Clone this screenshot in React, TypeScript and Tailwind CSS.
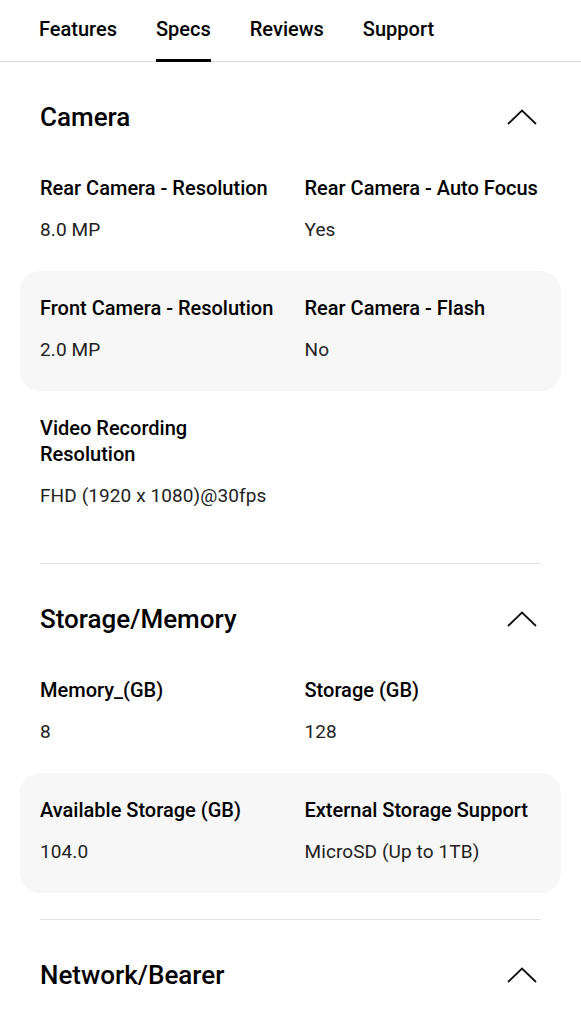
import React from "react";

type Spec = { label: string; value: string; wrap?: boolean };

const sections: { title: string; rows: Spec[][] }[] = [
  {
    title: "Camera",
    rows: [
      [
        { label: "Rear Camera - Resolution", value: "8.0 MP" },
        { label: "Rear Camera - Auto Focus", value: "Yes" },
      ],
      [
        { label: "Front Camera - Resolution", value: "2.0 MP" },
        { label: "Rear Camera - Flash", value: "No" },
      ],
      [{ label: "Video Recording Resolution", value: "FHD (1920 x 1080)@30fps", wrap: true }],
    ],
  },
  {
    title: "Storage/Memory",
    rows: [
      [
        { label: "Memory_(GB)", value: "8" },
        { label: "Storage (GB)", value: "128" },
      ],
      [
        { label: "Available Storage (GB)", value: "104.0" },
        { label: "External Storage Support", value: "MicroSD (Up to 1TB)" },
      ],
    ],
  },
];

const tabs = ["Features", "Specs", "Reviews", "Support"];

function ChevronUp() {
  return (
    <svg width="30" height="16" viewBox="0 0 30 16" fill="none" className="mr-1">
      <path d="M1 15L15 1.5L29 15" stroke="#111" strokeWidth="1.8" />
    </svg>
  );
}

function SpecRow({ row, shaded }: { row: Spec[]; shaded: boolean }) {
  return (
    <div
      className={`grid grid-cols-2 gap-x-[28px] px-5 pt-6 pb-7 rounded-[20px] ${
        shaded ? "bg-[#f7f7f7]" : ""
      }`}
    >
      {row.map((s) => (
        <div key={s.label}>
          <p
            className={`text-[20px] leading-[26px] font-medium text-black ${
              s.wrap ? "max-w-[180px]" : "whitespace-nowrap"
            }`}
          >
            {s.label}
          </p>
          <p className="mt-4 text-[19px] leading-[26px] text-[#222] tracking-[0.1px]">
            {s.value}
          </p>
        </div>
      ))}
    </div>
  );
}

export default function App() {
  return (
    <div
      className="min-h-screen bg-white text-black"
      style={{ fontFamily: "Roboto, 'Noto Sans', sans-serif" }}
    >
      <nav className="flex gap-[39px] px-[39px] h-[62px] border-b border-[#d6d6d6]">
        {tabs.map((t) => (
          <div key={t} className="relative flex items-start pt-[14px]">
            <span className="text-[20px] leading-[30px] font-medium">{t}</span>
            {t === "Specs" && (
              <span className="absolute left-0 right-0 -bottom-px h-[3px] bg-black" />
            )}
          </div>
        ))}
      </nav>

      {sections.map((sec) => (
        <section key={sec.title} className="px-5">
          <div className="flex items-center justify-between px-5 pt-[38px] pb-[17px]">
            <h2 className="text-[26px] leading-[34px] font-medium">{sec.title}</h2>
            <ChevronUp />
          </div>
          <div className="pb-[26px]">
            {sec.rows.map((row, i) => (
              <SpecRow key={i} row={row} shaded={i % 2 === 1} />
            ))}
          </div>
          <div className="mx-5 h-px bg-[#e3e3e3]" />
        </section>
      ))}

      <section className="px-5">
        <div className="flex items-center justify-between px-5 pt-[38px] pb-[17px]">
          <h2 className="text-[26px] leading-[34px] font-medium">Network/Bearer</h2>
          <ChevronUp />
        </div>
      </section>
    </div>
  );
}
